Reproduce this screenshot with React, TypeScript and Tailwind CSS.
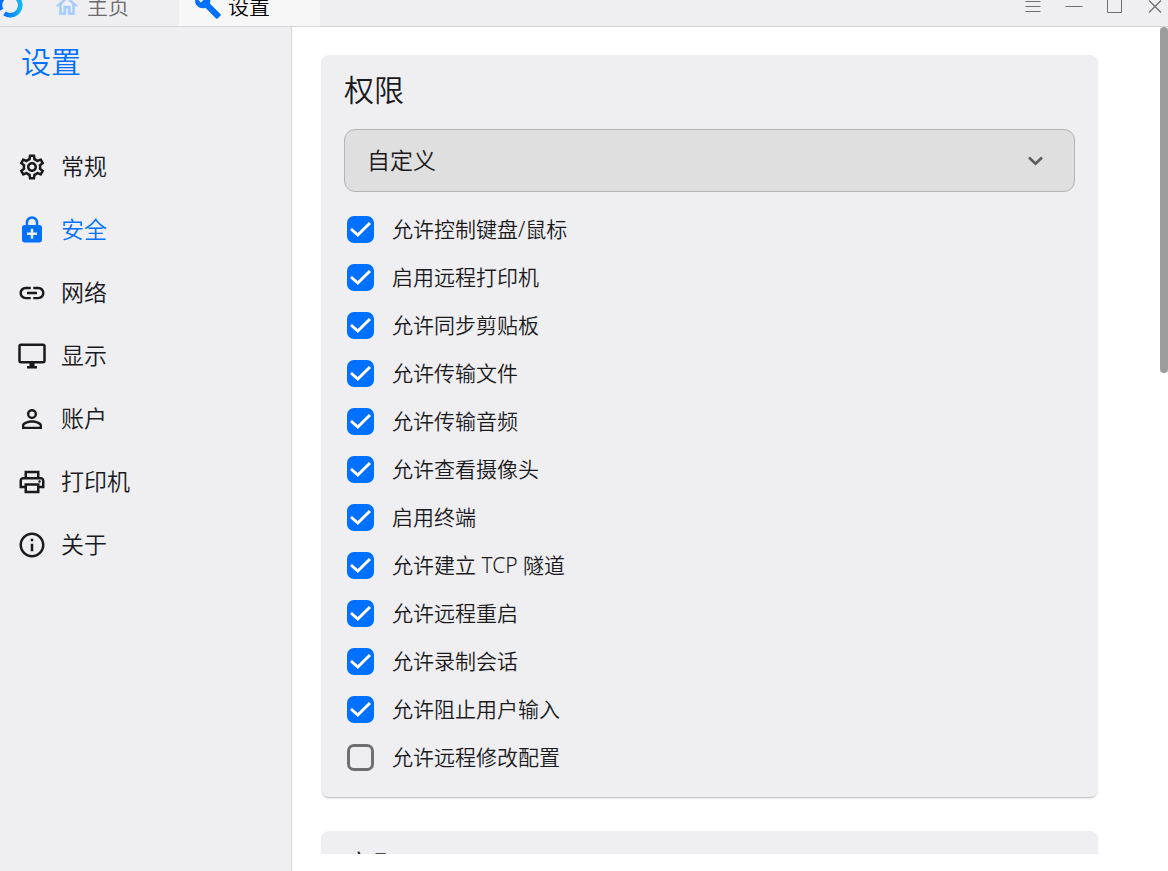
import { useState } from "react";
import type { IconType } from "react-icons";
import {
  MdEnhancedEncryption,
  MdInfoOutline,
  MdLink,
  MdOutlineDesktopWindows,
  MdOutlinePrint,
  MdOutlineSettings,
  MdPersonOutline,
} from "react-icons/md";

const navItems: { label: string; icon: IconType }[] = [
  { label: "常规", icon: MdOutlineSettings },
  { label: "安全", icon: MdEnhancedEncryption },
  { label: "网络", icon: MdLink },
  { label: "显示", icon: MdOutlineDesktopWindows },
  { label: "账户", icon: MdPersonOutline },
  { label: "打印机", icon: MdOutlinePrint },
  { label: "关于", icon: MdInfoOutline },
];

const permissions: { label: string; enabled: boolean }[] = [
  { label: "允许控制键盘/鼠标", enabled: true },
  { label: "启用远程打印机", enabled: true },
  { label: "允许同步剪贴板", enabled: true },
  { label: "允许传输文件", enabled: true },
  { label: "允许传输音频", enabled: true },
  { label: "允许查看摄像头", enabled: true },
  { label: "启用终端", enabled: true },
  { label: "允许建立 TCP 隧道", enabled: true },
  { label: "允许远程重启", enabled: true },
  { label: "允许录制会话", enabled: true },
  { label: "允许阻止用户输入", enabled: true },
  { label: "允许远程修改配置", enabled: false },
];

function Logo() {
  return (
    <svg viewBox="0 0 32 32" className="size-8 shrink-0" fill="none" strokeWidth="4.6" aria-hidden="true">
      <defs>
        <linearGradient id="logo" x1="0" y1="0" x2="1" y2="0">
          <stop offset="0" stopColor="#0071ff" />
          <stop offset="1" stopColor="#12b5f0" />
        </linearGradient>
      </defs>
      <path d="M24 7A10 10 0 0 1 12.5 23.4" stroke="url(#logo)" />
      <path d="M20 5.2A10 10 0 0 0 9.4 20" stroke="#0071ff" />
    </svg>
  );
}

function Home() {
  return (
    <svg
      viewBox="0 0 24 24"
      className="size-[26px] shrink-0 fill-[#a5cdfb] stroke-[#a5cdfb] stroke-[0.5]"
      aria-hidden="true"
    >
      <path d="M12 5.69l5 4.5V18h-2v-6H9v6H7v-7.81l5-4.5M12 3L2 12h3v8h6v-6h2v6h6v-8h3L12 3z" />
    </svg>
  );
}

function Wrench() {
  return (
    <svg viewBox="0 0 24 24" className="size-7 shrink-0 fill-[#0071ff]" aria-hidden="true">
      <path d="M22.7 19l-9.1-9.1c.9-2.3.4-5-1.5-6.9-2-2-5-2.4-7.4-1.3L9 6 6 9 1.6 4.7C.4 7.1.9 10.1 2.9 12.1c1.9 1.9 4.6 2.4 6.9 1.5l9.1 9.1c.4.4 1 .4 1.4 0l2.3-2.3c.5-.4.5-1.1.1-1.4z" />
    </svg>
  );
}

function TitleBar() {
  return (
    <header className="flex h-[27px] shrink-0 items-end overflow-hidden border-b border-[#d6d6d8] bg-[#efeff2]">
      <div className="flex h-10 flex-1 items-center">
        <div className="-ml-2 flex w-[62px] items-center">
          <Logo />
        </div>
        <button className="flex h-full w-[125px] items-center gap-[7px] text-[21px] leading-6 text-[#6b6b6d]">
          <Home />
          主页
        </button>
        <button className="flex h-full w-[141px] items-center gap-1.5 bg-[#f7f7f7] pl-[15px] text-[21px] leading-6 text-black">
          <Wrench />
          设置
        </button>
      </div>
      <div className="flex h-10 items-center gap-[17px] text-[#6f6f72]">
        <button aria-label="菜单">
          <svg viewBox="0 0 24 24" className="size-6" fill="none" stroke="currentColor">
            <path d="M4.5 7.5h15M4.5 12.5h15M4.5 17.5h15" />
          </svg>
        </button>
        <button aria-label="最小化">
          <svg viewBox="0 0 24 24" className="size-6" fill="none" stroke="currentColor">
            <path d="M3.5 12.5h17" />
          </svg>
        </button>
        <button aria-label="最大化">
          <svg viewBox="0 0 24 24" className="size-6" fill="none" stroke="currentColor">
            <path d="M4.5 5.5h14v13h-14z" />
          </svg>
        </button>
        <button aria-label="关闭">
          <svg viewBox="0 0 24 24" className="size-6" fill="none" stroke="currentColor" strokeWidth="1.3">
            <path d="M5 6.5l12 12M17 6.5L5 18.5" />
          </svg>
        </button>
      </div>
    </header>
  );
}

function Sidebar() {
  const [active, setActive] = useState("安全");
  return (
    <aside className="w-[292px] shrink-0 border-r border-[#d6d6d8] bg-[#efeff2]">
      <h1 className="mb-[38px] pl-[21px] text-[30px] leading-[70px] text-[#0071ff]">设置</h1>
      <nav>
        {navItems.map(({ label, icon: Icon }) => (
          <button
            key={label}
            onClick={() => setActive(label)}
            className={
              label === active
                ? "flex h-[63px] w-full items-center gap-3.5 pl-[17px] text-[23px] text-[#0071ff]"
                : "flex h-[63px] w-full items-center gap-3.5 pl-[17px] text-[23px] text-[#1a1a1c]"
            }
          >
            <Icon className="size-[30px] shrink-0" />
            {label}
          </button>
        ))}
      </nav>
    </aside>
  );
}

function PermissionRow({ label, enabled }: { label: string; enabled: boolean }) {
  return (
    <label className="flex h-12 items-center gap-[18px] pl-[3px] text-[21px] leading-7">
      <span className="grid size-[27px] shrink-0">
        <input
          type="checkbox"
          defaultChecked={enabled}
          className="peer col-start-1 row-start-1 size-[27px] appearance-none rounded-[7px] border-[3px] border-[#6f6f72] checked:border-[#0071ff] checked:bg-[#0071ff]"
        />
        <svg
          viewBox="0 0 27 27"
          className="pointer-events-none invisible col-start-1 row-start-1 size-[27px] peer-checked:visible"
          fill="none"
          stroke="#fff"
          strokeWidth="3"
          aria-hidden="true"
        >
          <path d="M4 13L10.8 19L23 7" />
        </svg>
      </span>
      {label}
    </label>
  );
}

export default function App() {
  return (
    <div className="flex h-screen flex-col overflow-hidden bg-white font-['Noto_Sans','Noto_Sans_CJK_SC',sans-serif] font-[350] text-[#1a1a1c]">
      <TitleBar />
      <div className="relative flex min-h-0 flex-1">
        <Sidebar />
        <main className="mb-[17px] flex min-w-0 flex-1 flex-col gap-[34px] overflow-hidden pt-7 pr-[70px] pl-[29px]">
          <section className="shrink-0 rounded-lg bg-[#efeff2] px-[23px] pb-4 shadow-[0_2px_2px_-1px_rgba(0,0,0,0.3)]">
            <h2 className="pb-1 text-[30px] leading-[70px]">权限</h2>
            <div className="mb-[13px] grid items-center">
              <select
                aria-label="权限"
                className="col-start-1 row-start-1 h-[63px] w-full appearance-none rounded-[11px] border border-[#b4b4b6] bg-[#dfdfdf] pl-[22px] text-[23px]"
              >
                <option>自定义</option>
              </select>
              <svg
                viewBox="0 0 24 24"
                className="pointer-events-none col-start-1 row-start-1 mr-[27px] size-6 justify-self-end"
                fill="none"
                stroke="#5c5c5e"
                strokeWidth="2.6"
                aria-hidden="true"
              >
                <path d="M5 8.5L11.5 14.8L18 8.5" />
              </svg>
            </div>
            {permissions.map((permission) => (
              <PermissionRow key={permission.label} {...permission} />
            ))}
          </section>
          <section className="shrink-0 rounded-lg bg-[#efeff2] px-[23px] pb-4 shadow-[0_2px_2px_-1px_rgba(0,0,0,0.3)]">
            <h2 className="text-[30px] leading-[70px]">密码</h2>
          </section>
        </main>
        <div className="absolute top-0 right-0 h-[346px] w-2 rounded bg-[#9d9d9d]" />
      </div>
    </div>
  );
}
